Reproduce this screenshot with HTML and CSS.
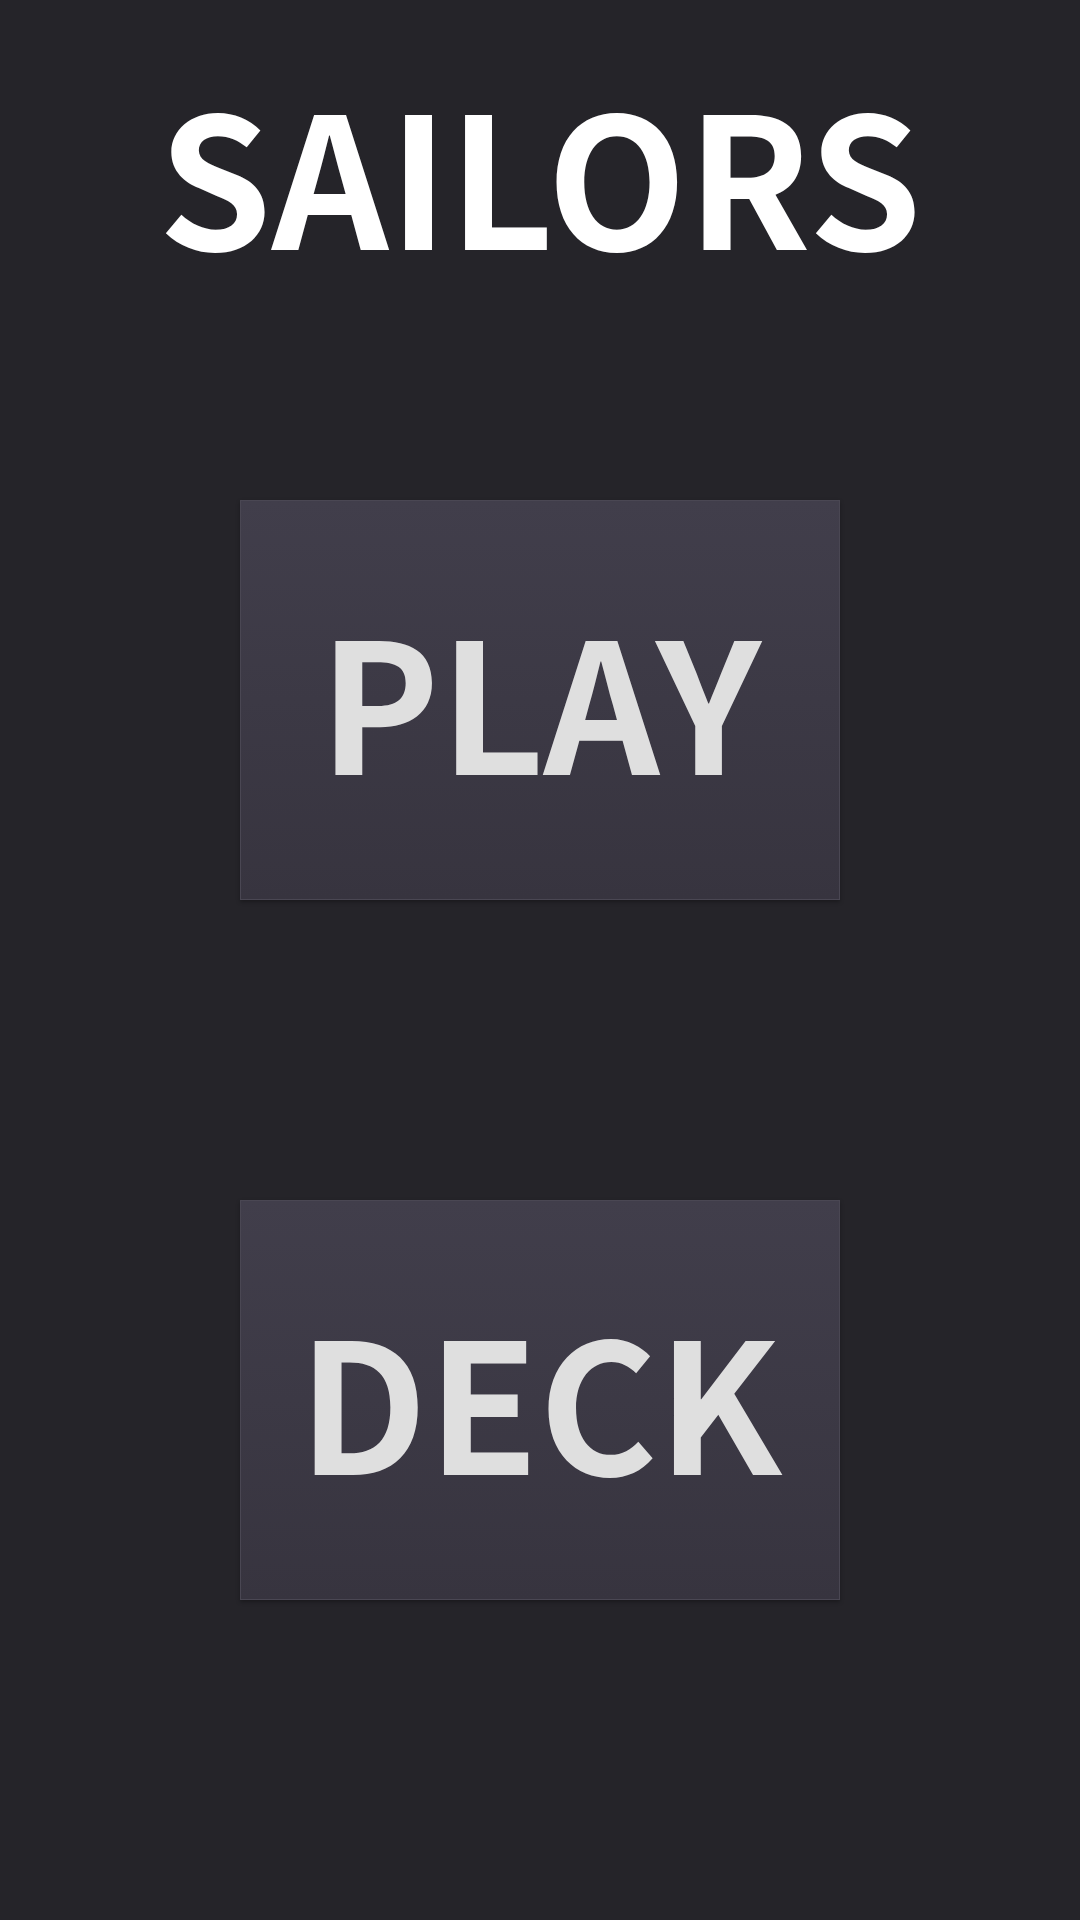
FILE: index.html
```html
<!DOCTYPE html>
<html>
<head>
<meta charset="utf-8">
<link rel="stylesheet" href="styles.css">
</head>
<body>
<main class="screen">
  <h1 class="title">SAILORS</h1>
  <div class="menu">
    <button class="menu-btn">PLAY</button>
    <button class="menu-btn">DECK</button>
  </div>
</main>
</body>
</html>
```
FILE: styles.css
```css
html, body {
  margin: 0;
  padding: 0;
  background: #252429;
}
.screen {
  width: 1080px;
  height: 1920px;
  display: flex;
  flex-direction: column;
  align-items: center;
  font-family: "Noto Sans CJK SC", "Noto Sans", sans-serif;
}
.title {
  margin: 81px 0 0 0;
  font-size: 182px;
  line-height: 180px;
  height: 180px;
  font-weight: 700;
  color: #ffffff;
  letter-spacing: 0;
}
.menu {
  margin-top: 239px;
  display: flex;
  flex-direction: column;
  gap: 300px;
}
.menu-btn {
  width: 600px;
  height: 400px;
  box-sizing: border-box;
  border: 1px solid #4a4753;
  background: linear-gradient(to bottom, #413e4b, #37343f);
  color: #dfdfdf;
  font-family: inherit;
  font-size: 181px;
  font-weight: 700;
  line-height: 180px;
  padding: 0 0 8px 0;
  display: flex;
  align-items: center;
  justify-content: center;
  box-shadow: 0 2px 4px rgba(0,0,0,0.3);
}
```
